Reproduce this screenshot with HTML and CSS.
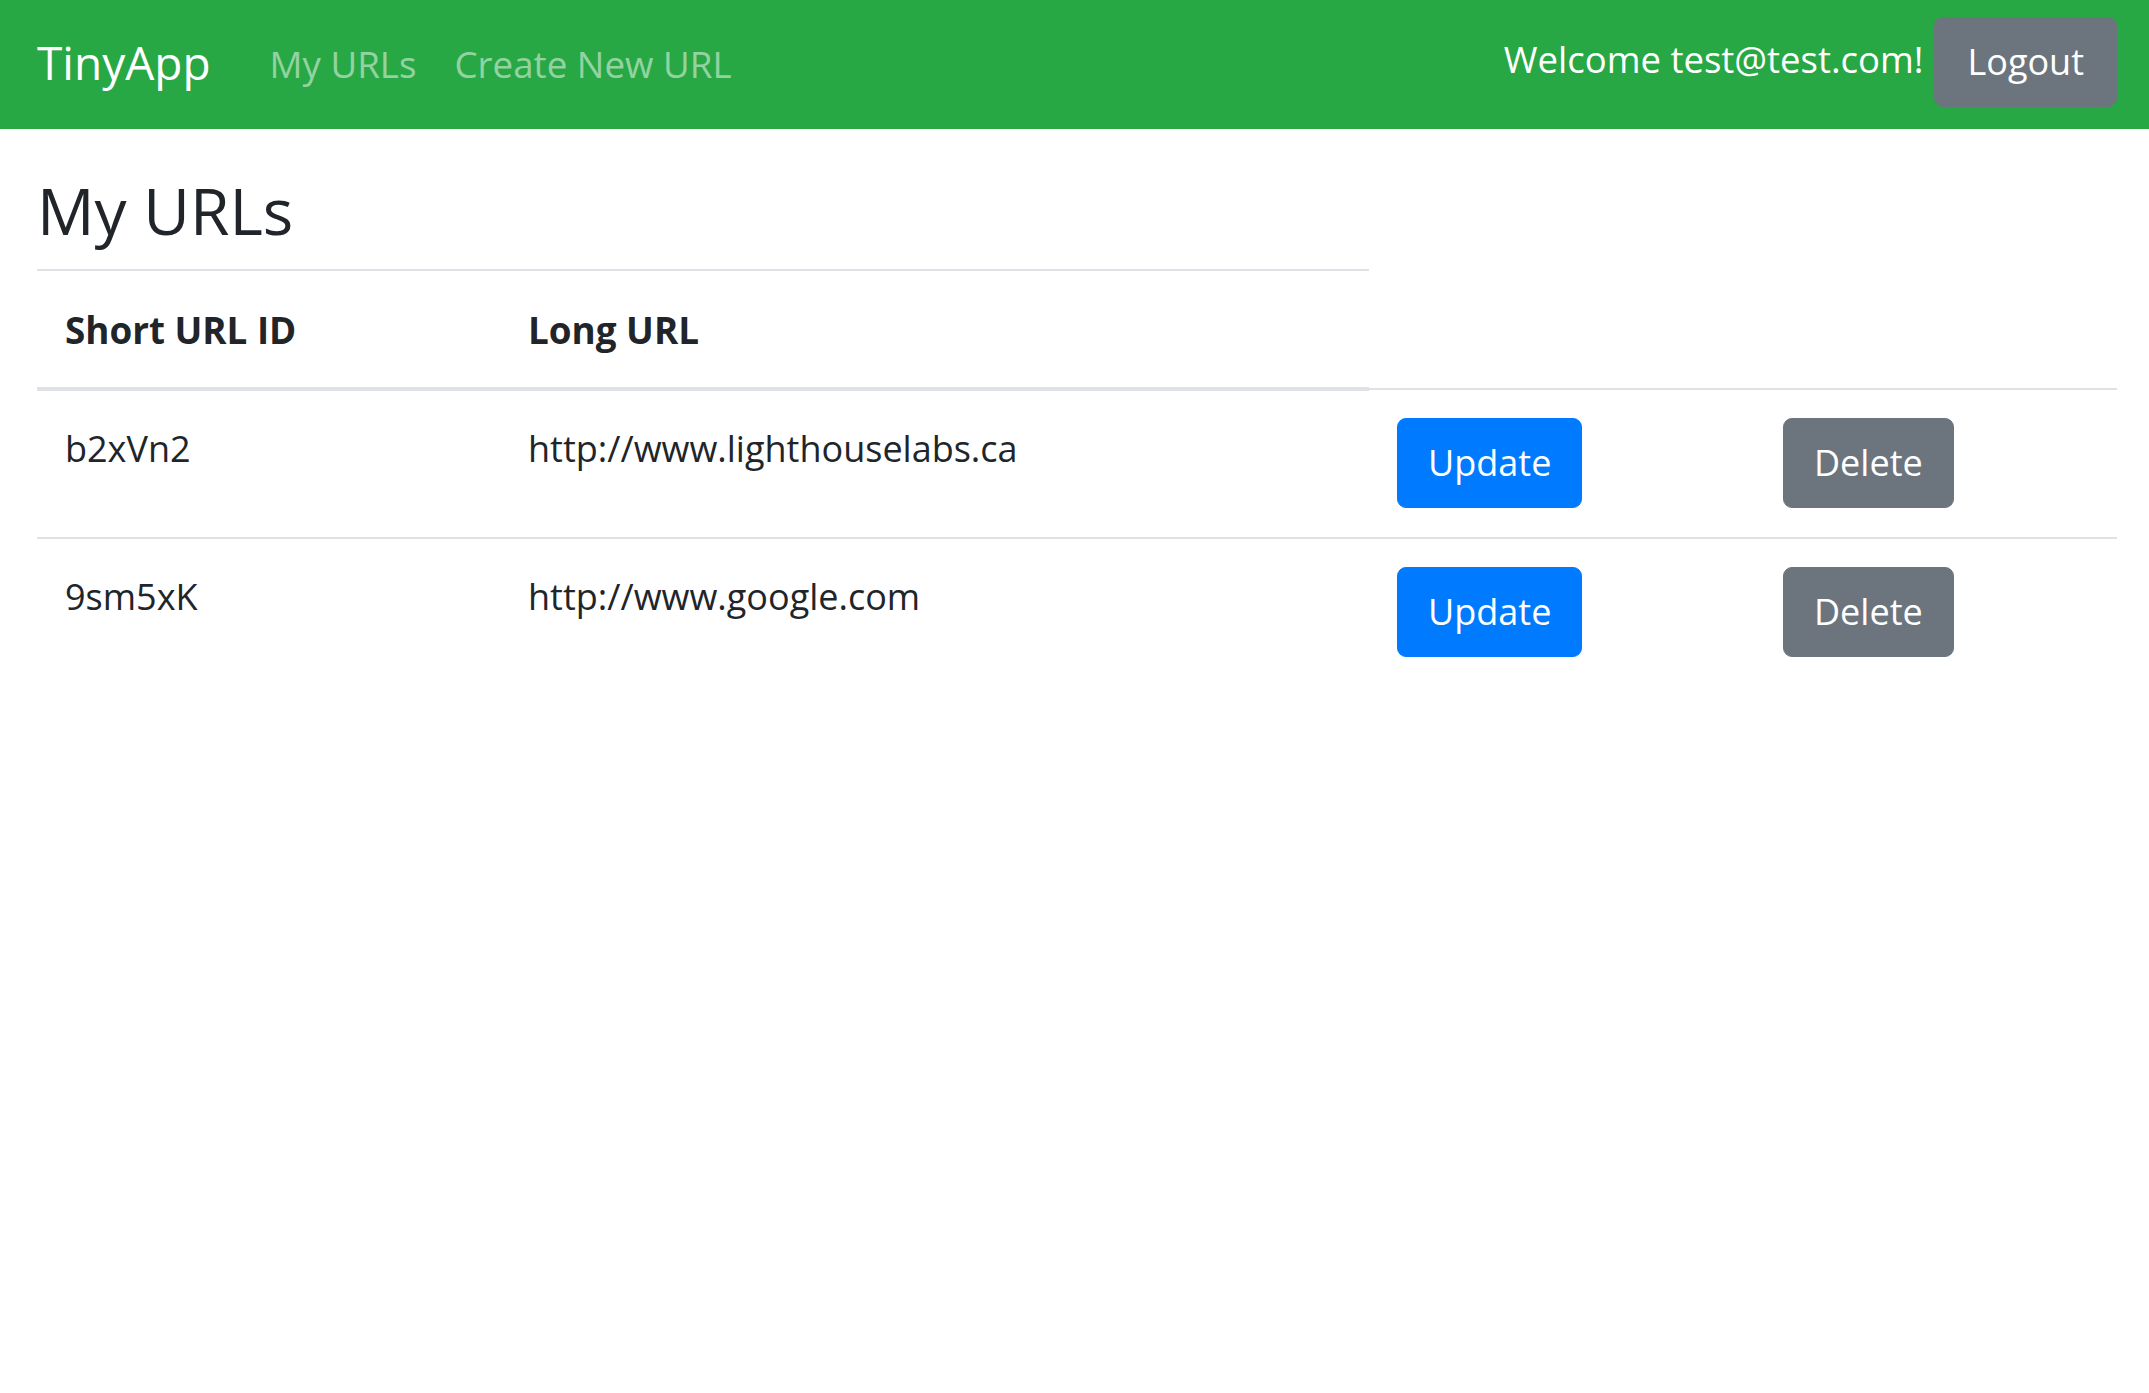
FILE: index.html
```html
<!DOCTYPE html>
<html lang="en">
<head>
<meta charset="utf-8">
<title>TinyApp - My URLs</title>
<link rel="stylesheet" href="styles.css">
</head>
<body>
<nav class="navbar">
  <a class="brand" href="#">TinyApp</a>
  <ul class="nav-links">
    <li><a class="nav-link" href="#">My URLs</a></li>
    <li><a class="nav-link" href="#">Create New URL</a></li>
  </ul>
  <div class="nav-user">
    <span class="welcome">Welcome test@test.com!</span>
    <button class="btn btn-secondary btn-logout" type="button">Logout</button>
  </div>
</nav>
<main class="container">
  <h1 class="page-title">My URLs</h1>
  <table class="url-table">
    <thead>
      <tr>
        <th class="col-id">Short URL ID</th>
        <th class="col-long">Long URL</th>
      </tr>
    </thead>
    <tbody>
      <tr>
        <td class="col-id">b2xVn2</td>
        <td class="col-long">http://www.lighthouselabs.ca</td>
        <td class="col-update"><button class="btn btn-primary" type="button">Update</button></td>
        <td class="col-delete"><button class="btn btn-secondary" type="button">Delete</button></td>
      </tr>
      <tr>
        <td class="col-id">9sm5xK</td>
        <td class="col-long">http://www.google.com</td>
        <td class="col-update"><button class="btn btn-primary" type="button">Update</button></td>
        <td class="col-delete"><button class="btn btn-secondary" type="button">Delete</button></td>
      </tr>
    </tbody>
  </table>
</main>
</body>
</html>
```

FILE: styles.css
```css
* {
  box-sizing: border-box;
}

body {
  margin: 0;
  background: #ffffff;
  color: #212529;
  font-family: "Open Sans", "Noto Sans", sans-serif;
  font-size: 36px;
  line-height: 1.5;
}

.navbar {
  display: flex;
  align-items: center;
  height: 129px;
  padding: 0 32px 0 37px;
  background: #28a745;
}

.brand {
  color: #ffffff;
  text-decoration: none;
  font-size: 46px;
  line-height: 1.5;
  margin-right: 40px;
  margin-bottom: 4px;
}

.nav-links {
  display: flex;
  list-style: none;
  margin: 0;
  padding: 0;
}

.nav-link {
  display: block;
  padding: 0 19px;
  color: rgba(255, 255, 255, 0.5);
  text-decoration: none;
  font-size: 36.7px;
}

.nav-user {
  margin-left: auto;
  display: flex;
  align-items: center;
  gap: 11px;
}

.welcome {
  color: #ffffff;
  font-size: 36.5px;
  margin-bottom: 10px;
}

.btn {
  display: inline-block;
  font-family: inherit;
  font-size: 36px;
  line-height: 54px;
  padding: 17px 30px;
  border: 1px solid transparent;
  border-radius: 9px;
  color: #ffffff;
  cursor: pointer;
}

.btn-logout {
  padding: 17px 32px;
  margin-bottom: 5px;
}

.btn-primary {
  background: #007bff;
  border-color: #007bff;
}

.btn-secondary {
  background: #6c757d;
  border-color: #6c757d;
}

.container {
  padding: 44px 32px 0 37px;
}

.page-title {
  margin: 0 0 19px;
  font-size: 64px;
  font-weight: 400;
  line-height: 1.2;
}

.url-table {
  width: 100%;
  border-collapse: collapse;
}

.url-table th,
.url-table td {
  padding: 28px;
  text-align: left;
  vertical-align: top;
  border-top: 2px solid #dee2e6;
}

.url-table thead th {
  padding: 32px 28px 29px;
  font-size: 36.8px;
  font-weight: 700;
  border-bottom: 4px solid #dee2e6;
}

.url-table td {
  padding: 28px 28px 29px;
  line-height: 60px;
}

.col-id {
  width: 463px;
}

.col-long {
  width: 869px;
}

.col-update {
  width: 386px;
}

.col-delete {
  width: 362px;
}
```
